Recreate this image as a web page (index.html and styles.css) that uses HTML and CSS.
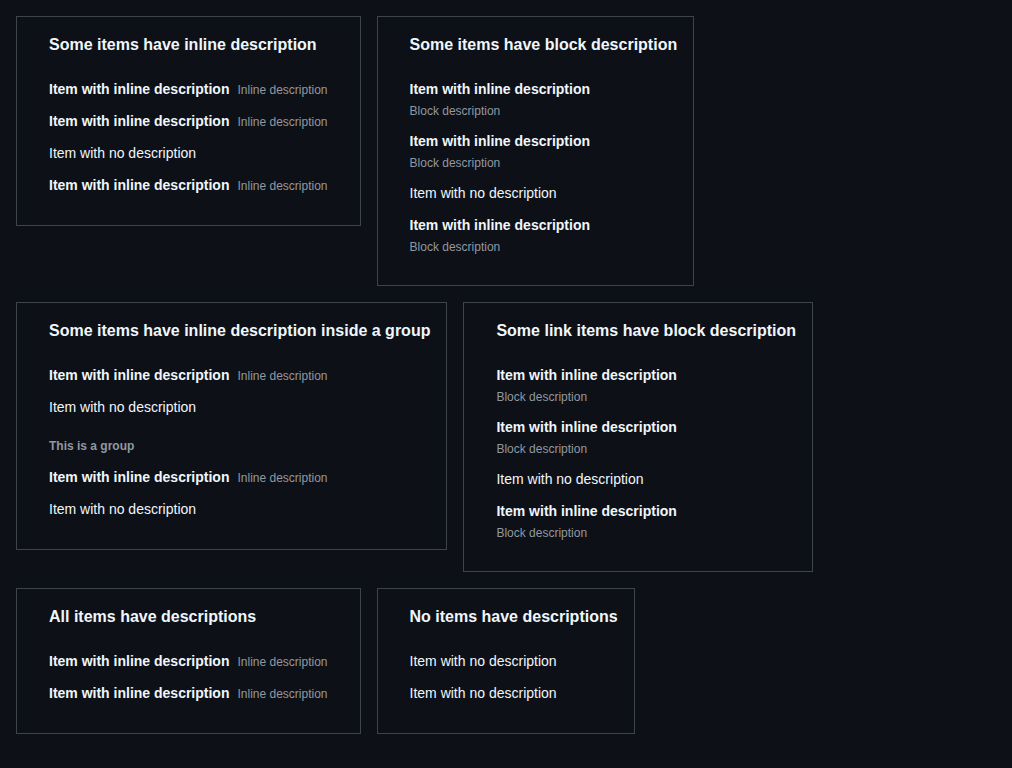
FILE: index.html
```html
<!DOCTYPE html>
<html lang="en">
<head>
<meta charset="utf-8">
<title>ActionList descriptions</title>
<link rel="stylesheet" href="styles.css">
</head>
<body>
<main class="page">
  <section class="card">
    <h2 class="card-title">Some items have inline description</h2>
    <ul class="list">
      <li class="item inline"><span class="label strong">Item with inline description</span><span class="desc">Inline description</span></li>
      <li class="item inline"><span class="label strong">Item with inline description</span><span class="desc">Inline description</span></li>
      <li class="item inline"><span class="label">Item with no description</span></li>
      <li class="item inline"><span class="label strong">Item with inline description</span><span class="desc">Inline description</span></li>
    </ul>
  </section>

  <section class="card">
    <h2 class="card-title">Some items have block description</h2>
    <ul class="list">
      <li class="item block"><span class="label strong">Item with inline description</span><span class="desc">Block description</span></li>
      <li class="item block"><span class="label strong">Item with inline description</span><span class="desc">Block description</span></li>
      <li class="item block"><span class="label">Item with no description</span></li>
      <li class="item block"><span class="label strong">Item with inline description</span><span class="desc">Block description</span></li>
    </ul>
  </section>

  <section class="card">
    <h2 class="card-title">Some items have inline description inside a group</h2>
    <ul class="list">
      <li class="item inline"><span class="label strong">Item with inline description</span><span class="desc">Inline description</span></li>
      <li class="item inline"><span class="label">Item with no description</span></li>
      <li class="group">
        <div class="group-title">This is a group</div>
        <ul class="group-list">
          <li class="item inline"><span class="label strong">Item with inline description</span><span class="desc">Inline description</span></li>
          <li class="item inline"><span class="label">Item with no description</span></li>
        </ul>
      </li>
    </ul>
  </section>

  <section class="card">
    <h2 class="card-title">Some link items have block description</h2>
    <ul class="list">
      <li class="item block"><span class="label strong">Item with inline description</span><span class="desc">Block description</span></li>
      <li class="item block"><span class="label strong">Item with inline description</span><span class="desc">Block description</span></li>
      <li class="item block"><span class="label">Item with no description</span></li>
      <li class="item block"><span class="label strong">Item with inline description</span><span class="desc">Block description</span></li>
    </ul>
  </section>

  <section class="card">
    <h2 class="card-title">All items have descriptions</h2>
    <ul class="list">
      <li class="item inline"><span class="label strong">Item with inline description</span><span class="desc">Inline description</span></li>
      <li class="item inline"><span class="label strong">Item with inline description</span><span class="desc">Inline description</span></li>
    </ul>
  </section>

  <section class="card">
    <h2 class="card-title">No items have descriptions</h2>
    <ul class="list">
      <li class="item inline"><span class="label">Item with no description</span></li>
      <li class="item inline"><span class="label">Item with no description</span></li>
    </ul>
  </section>
</main>
</body>
</html>
```
FILE: styles.css
```css
html, body {
  margin: 0;
  padding: 0;
  background: #0d1117;
}

body {
  font-family: "Liberation Sans", Arial, sans-serif;
  color: #e6edf3;
}

.page {
  display: flex;
  flex-wrap: wrap;
  align-items: flex-start;
  gap: 16px;
  padding: 16px;
}

.card {
  border: 1px solid #3d444d;
  padding: 16px;
}

.card-title {
  margin: 0;
  padding-left: 16px;
  font-size: 16px;
  line-height: 24px;
  font-weight: 700;
  color: #f0f6fc;
  white-space: nowrap;
}

.list,
.group-list {
  list-style: none;
  margin: 0;
  padding: 0;
}

.list {
  padding: 8px 0;
  margin-top: 8px;
}

.item {
  margin: 0 8px;
  padding: 6px 8px;
  font-size: 14px;
  line-height: 20px;
  white-space: nowrap;
}

.item.inline {
  display: flex;
  align-items: baseline;
  gap: 8px;
}

.item.block {
  display: flex;
  flex-direction: column;
  gap: 4px;
}

.label {
  color: #f0f6fc;
}

.label.strong {
  font-weight: 700;
}

.desc {
  font-size: 12px;
  line-height: 16px;
  color: #9198a1;
}

.group {
  margin-top: 8px;
}

.group-title {
  padding: 6px 16px;
  font-size: 12px;
  line-height: 18px;
  font-weight: 700;
  color: #9198a1;
}
```
